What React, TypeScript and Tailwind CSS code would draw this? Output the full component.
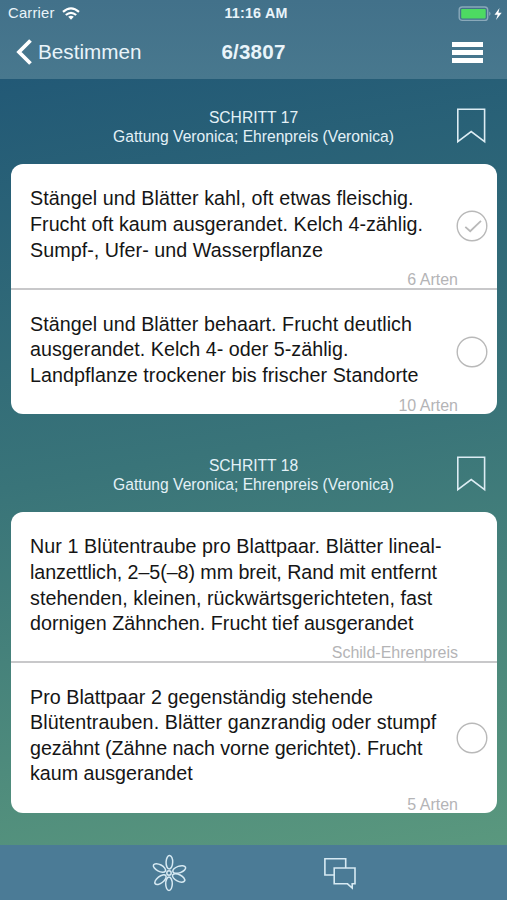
import React from "react";

type Line = [text: string, tracking: string];
type Option = { lines: Line[]; note: string; state: "checked" | "open" | "none"; height: string };

const stepOne: Option[] = [
  {
    lines: [
      ["Stängel und Blätter kahl, oft etwas fleischig.", "tracking-[0.06px]"],
      ["Frucht oft kaum ausgerandet. Kelch 4-zählig.", "tracking-[0.03px]"],
      ["Sumpf-, Ufer- und Wasserpflanze", "tracking-[0.05px]"],
    ],
    note: "6 Arten",
    state: "checked",
    height: "h-[124px]",
  },
  {
    lines: [
      ["Stängel und Blätter behaart. Frucht deutlich", "tracking-[0.05px]"],
      ["ausgerandet. Kelch 4- oder 5-zählig.", "tracking-[0.03px]"],
      ["Landpflanze trockener bis frischer Standorte", "tracking-[0.05px]"],
    ],
    note: "10 Arten",
    state: "open",
    height: "h-[126px]",
  },
];

const stepTwo: Option[] = [
  {
    lines: [
      ["Nur 1 Blütentraube pro Blattpaar. Blätter lineal-", "tracking-[0.07px]"],
      ["lanzettlich, 2–5(–8) mm breit, Rand mit entfernt", "tracking-[-0.07px]"],
      ["stehenden, kleinen, rückwärtsgerichteten, fast", "tracking-[0.04px]"],
      ["dornigen Zähnchen. Frucht tief ausgerandet", "tracking-[0.01px]"],
    ],
    note: "Schild-Ehrenpreis",
    state: "none",
    height: "h-[149px]",
  },
  {
    lines: [
      ["Pro Blattpaar 2 gegenständig stehende", "tracking-[0.04px]"],
      ["Blütentrauben. Blätter ganzrandig oder stumpf", "tracking-[0.08px]"],
      ["gezähnt (Zähne nach vorne gerichtet). Frucht", "tracking-[-0.06px]"],
      ["kaum ausgerandet", "tracking-[-0.03px]"],
    ],
    note: "5 Arten",
    state: "open",
    height: "h-[152px]",
  },
];

function Selector({ checked }: { checked: boolean }) {
  return (
    <svg width="32" height="32" viewBox="0 0 32 32" fill="none" stroke="#b9b9b9">
      <circle cx="16" cy="16" r="14.8" strokeWidth="1.4" />
      {checked && <path d="M9.3 16.8l4.9 4.4 10.8-10.4" strokeWidth="1.8" />}
    </svg>
  );
}

function OptionRow({ option, first }: { option: Option; first: boolean }) {
  return (
    <div className={`relative pl-[19px] ${option.height} ${first ? "pt-[22.4px]" : "border-t-2 border-[#c8c8ca] pt-[21.6px]"}`}>
      <div className="text-[19.7px] leading-[25.6px] text-[#151515]">
        {option.lines.map(([text, tracking]) => (
          <p key={text} className={`whitespace-nowrap ${tracking}`}>{text}</p>
        ))}
      </div>
      {option.state !== "none" && (
        <div className="absolute inset-y-0 right-[9px] flex items-center">
          <Selector checked={option.state === "checked"} />
        </div>
      )}
      <span className="absolute bottom-0 right-[39px] text-[16px] leading-[17px] text-[#b4b4b6]">{option.note}</span>
    </div>
  );
}

function Step({ title, options }: { title: string; options: Option[] }) {
  return (
    <section>
      <div className="relative h-[85px] pt-[30px] text-center text-[15.65px] leading-[18.5px] text-[#e3f1f7]">
        <p>{title}</p>
        <p>Gattung Veronica; Ehrenpreis (Veronica)</p>
        <svg className="absolute right-[21px] top-[29px]" width="30" height="36" viewBox="0 0 30 36" fill="none" stroke="#dcecf3" strokeWidth="1.6">
          <path d="M1.8 1.2H28.6V33.6L15.2 23.6 1.8 33.6Z" />
        </svg>
      </div>
      <div className="ml-[11px] mr-[10px] overflow-hidden rounded-[12px] bg-white">
        {options.map((o, i) => (
          <OptionRow key={o.note} option={o} first={i === 0} />
        ))}
      </div>
    </section>
  );
}

function Header() {
  return (
    <header className="h-[79px] bg-gradient-to-b from-[#42718a] to-[#48788e] text-[#e9f4fa]">
      <div className="grid h-[27px] grid-cols-[1fr_80px_1fr] items-center pl-[8px] pr-[3px]">
        <div className="flex items-center gap-[7px]">
          <span className="text-[14.8px] tracking-[0.2px]">Carrier</span>
          <svg width="18" height="13" viewBox="0 0 18 13" fill="none" stroke="white" strokeWidth="2.2">
            <path d="M1 4.8Q9-2.2 17 4.8M3.8 8Q9 3.6 14.2 8" />
            <path d="M6.2 9.8Q9 7.6 11.8 9.8L9 12.8Z" fill="white" stroke="none" />
          </svg>
        </div>
        <span className="whitespace-nowrap text-center text-[14.3px] font-bold tracking-[0.2px]">11:16 AM</span>
        <div className="flex items-center justify-end">
          <svg width="46" height="16" viewBox="0 0 46 16">
            <rect x="1.2" y="1" width="28.5" height="13.4" rx="3" fill="none" stroke="#8aa9ba" strokeWidth="1.4" />
            <rect x="3.2" y="3" width="24.5" height="9.4" rx="0.8" fill="#4dda62" />
            <path d="M31.2 5.5Q34 7.7 31.2 9.9Z" fill="#8aa9ba" />
            <path d="M41.5 2L36.5 8.8H39.7L38 14 43.7 6.7H40.4Z" fill="white" />
          </svg>
        </div>
      </div>
      <div className="grid h-[50px] grid-cols-[1fr_80px_1fr] items-center pl-[16px] pr-[24px]">
        <div className="flex items-center gap-[6px]">
          <svg width="16" height="26" viewBox="0 0 16 26" fill="none" stroke="white" strokeWidth="3.8">
            <path d="M14.5 1.5L3 13 14.5 24.5" />
          </svg>
          <span className="text-[20.7px]">Bestimmen</span>
        </div>
        <span className="ml-[8px] text-center text-[20.6px] font-bold tracking-[0.2px]">6/3807</span>
        <div className="flex flex-col items-end gap-[3px]">
          <span className="h-[5px] w-[31px] bg-white" />
          <span className="h-[5px] w-[31px] bg-white" />
          <span className="h-[5px] w-[31px] bg-white" />
        </div>
      </div>
    </header>
  );
}

function Flower() {
  return (
    <svg width="38" height="38" viewBox="-19 -19 38 38" fill="none" stroke="#d7eaf3" strokeWidth="1.5">
      <circle r="2.2" />
      {[2, 71, 117, 180, 232, 298].map((a) => (
        <ellipse key={a} cx="0" cy="-10.8" rx="3.3" ry="6.7" transform={`rotate(${a})`} />
      ))}
    </svg>
  );
}

function Chat() {
  return (
    <svg width="34" height="34" viewBox="0 0 34 34" fill="none" stroke="#d7eaf3" strokeWidth="1.6">
      <path d="M11 19H1.9V2.7H22.7V12" />
      <path d="M11.2 12H32V27.8H29.2V32L24.5 27.8H11.2Z" />
    </svg>
  );
}

export default function App() {
  return (
    <div className="flex h-[900px] w-[507px] flex-col overflow-hidden font-['Liberation_Sans',sans-serif]">
      <Header />
      <main className="flex flex-1 flex-col gap-[13px] bg-[linear-gradient(170deg,#225976_0%,#397479_48%,#5a987e_100%)]">
        <Step title="SCHRITT 17" options={stepOne} />
        <Step title="SCHRITT 18" options={stepTwo} />
      </main>
      <footer className="flex h-[55px] items-center bg-[#4b7b96]">
        <div className="flex w-[338px] justify-center"><Flower /></div>
        <div className="-ml-[15px]"><Chat /></div>
      </footer>
    </div>
  );
}
